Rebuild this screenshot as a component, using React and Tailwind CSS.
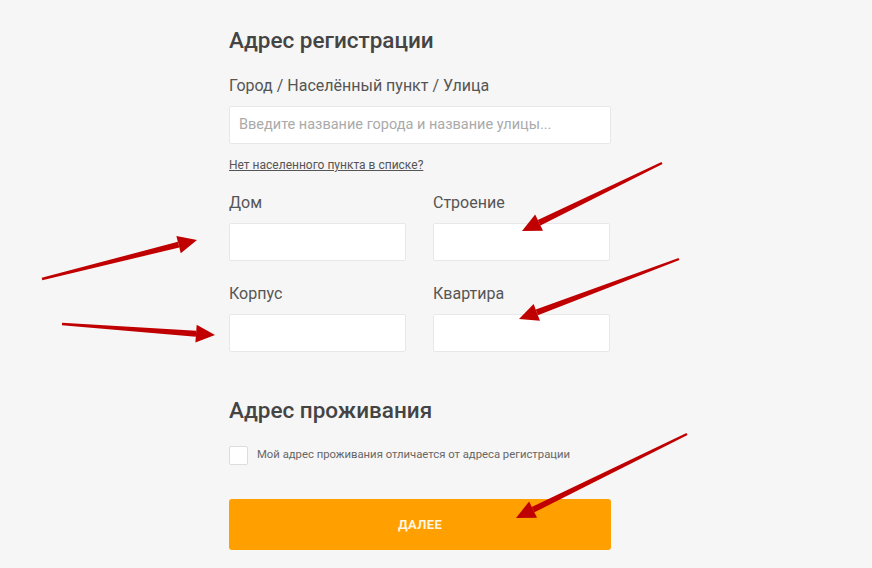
import React from 'react';

const Field = ({ label, className = '' }) => (
  <div className={className}>
    <div className="text-[16px] leading-5 text-[#555]">{label}</div>
    <div className="mt-[10px] h-[38px] rounded-[2px] border border-[#e8e8e8] bg-white" />
  </div>
);

const Arrow = ({ x1, y1, x2, y2 }) => {
  const a = Math.atan2(y2 - y1, x2 - x1);
  const len = 19;
  const w = 9;
  const bx = x2 - len * Math.cos(a);
  const by = y2 - len * Math.sin(a);
  const px = -Math.sin(a);
  const py = Math.cos(a);
  const head = `${x2},${y2} ${bx + px * w},${by + py * w} ${bx - px * w},${by - py * w}`;
  const t0 = 1.2;
  const t1 = 3;
  const body = `${x1 + px * t0},${y1 + py * t0} ${bx + px * t1},${by + py * t1} ${bx - px * t1},${by - py * t1} ${x1 - px * t0},${y1 - py * t0}`;
  return (
    <g fill="#c00000">
      <polygon points={body} />
      <polygon points={head} />
    </g>
  );
};

const App = () => {
  return (
    <div className="relative h-[568px] w-[872px] overflow-hidden bg-[#f6f6f6] font-['Roboto',sans-serif]">
      <div className="ml-[229px] w-[382px] pt-[26px]">
        <h2 className="text-[22.5px] font-medium leading-7 text-[#444]">Адрес регистрации</h2>

        <div className="mt-[22px] text-[16px] leading-5 text-[#555]">Город / Населённый пункт / Улица</div>
        <div className="mt-[10px] flex h-[38px] items-center rounded-[2px] border border-[#e8e8e8] bg-white px-[9px] text-[14.5px] text-[#aaa]">
          Введите название города и название улицы...
        </div>

        <div className="mt-[13px] text-[12px] leading-4 text-[#555] underline">Нет населенного пункта в списке?</div>

        <div className="mt-[20px] grid w-[381px] grid-cols-2 gap-x-[27px] gap-y-[23px]">
          <Field label="Дом" />
          <Field label="Строение" />
          <Field label="Корпус" />
          <Field label="Квартира" />
        </div>

        <h2 className="mt-[44px] text-[22.5px] font-medium leading-7 text-[#444]">Адрес проживания</h2>

        <div className="mt-[22px] flex items-center gap-[9px]">
          <div className="h-[19px] w-[19px] rounded-[2px] border border-[#ddd] bg-white" />
          <span className="text-[11.3px] text-[#666]">Мой адрес проживания отличается от адреса регистрации</span>
        </div>

        <button className="mt-[34px] flex h-[51px] w-full items-center justify-center rounded-[3px] bg-[#ff9f00] text-[13px] font-bold tracking-wide text-[#fff6e0]">
          ДАЛЕЕ
        </button>
      </div>

      <svg className="pointer-events-none absolute left-0 top-0" width="872" height="568">
        <Arrow x1={42} y1={279} x2={197} y2={240} />
        <Arrow x1={62} y1={324} x2={215} y2={335} />
        <Arrow x1={662} y1={163} x2={522} y2={231} />
        <Arrow x1={679} y1={259} x2={519} y2={319} />
        <Arrow x1={687} y1={434} x2={516} y2={518} />
      </svg>
    </div>
  );
};

export default App;
